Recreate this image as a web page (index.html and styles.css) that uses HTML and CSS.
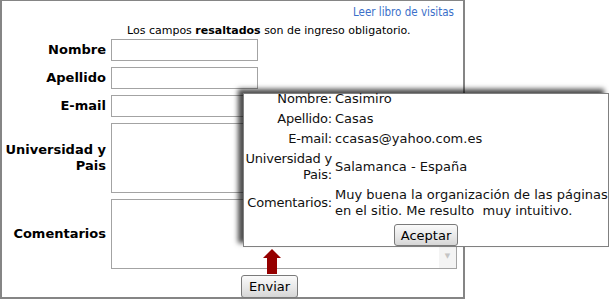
FILE: index.html
```html
<!DOCTYPE html>
<html lang="es">
<head>
    <meta charset="UTF-8">
    <title>Libro de visitas</title>
    <link rel="stylesheet" href="styles.css">
</head>
<body>
<div class="frame">
    <div class="top-link"><a href="#">Leer libro de visitas</a></div>
    <p class="note">Los campos <b>resaltados</b> son de ingreso obligatorio.</p>

    <form class="guest-form">
        <label class="lbl" for="nombre">Nombre</label>
        <input class="field" type="text" id="nombre">

        <label class="lbl" for="apellido">Apellido</label>
        <input class="field" type="text" id="apellido">

        <label class="lbl" for="email">E-mail</label>
        <input class="field" type="text" id="email">

        <label class="lbl" for="univ">Universidad y<br>Pais</label>
        <textarea class="area" id="univ"></textarea>

        <label class="lbl" for="coment">Comentarios</label>
        <div class="area area-scroll">
            <span class="scrollbar">&#9660;</span>
        </div>

        <div class="send-row">
            <button type="button" class="btn">Enviar</button>
        </div>
    </form>

    <div class="arrow">
        <span class="arrow-head"></span>
        <span class="arrow-shaft"></span>
    </div>
</div>

<div class="popup">
    <div class="summary">
        <span class="s-lbl">Nombre:</span><span class="s-val">Casimiro</span>
        <span class="s-lbl">Apellido:</span><span class="s-val">Casas</span>
        <span class="s-lbl">E-mail:</span><span class="s-val">ccasas@yahoo.com.es</span>
        <span class="s-lbl">Universidad y<br>Pais:</span><span class="s-val">Salamanca - España</span>
        <span class="s-lbl">Comentarios:</span><span class="s-val">Muy buena la organización de las páginas<br>en el sitio. Me resulto&nbsp; muy intuitivo.</span>
    </div>
    <div class="popup-foot">
        <button type="button" class="btn btn-ok">Aceptar</button>
    </div>
</div>
</body>
</html>
```
FILE: styles.css
```css
body {
    margin: 0;
    background: #fff;
    font-family: 'DejaVu Sans', Verdana, sans-serif;
    color: #000;
}

.frame {
    position: relative;
    width: 461px;
    height: 296px;
    border: 2px solid #858585;
    border-top-width: 1px;
}

.top-link {
    text-align: right;
    padding: 4px 9px 0 0;
    height: 16px;
    font-size: 11px;
}

.top-link a {
    color: #3b6fc9;
    text-decoration: none;
    font-family: 'DejaVu Sans Condensed', 'DejaVu Sans', sans-serif;
    font-size: 11.5px;
}

.note {
    margin: 3px 0 0 0;
    padding-left: 125px;
    font-size: 11px;
    line-height: 13px;
    height: 13px;
}

.guest-form {
    display: grid;
    grid-template-columns: 104px 346px;
    column-gap: 5px;
    row-gap: 6px;
    margin-top: 2px;
}

.lbl {
    font-weight: bold;
    font-size: 13px;
    text-align: right;
    align-self: center;
    line-height: 16px;
}

.field {
    box-sizing: border-box;
    width: 147px;
    height: 22px;
    margin: 0;
    border: 1px solid #a3a3a3;
}

.area {
    box-sizing: border-box;
    width: 346px;
    height: 70px;
    margin: 0;
    border: 1px solid #a3a3a3;
    resize: none;
}

.area-scroll {
    position: relative;
}

.scrollbar {
    position: absolute;
    right: 0;
    top: 0;
    bottom: 0;
    width: 17px;
    background: #f4f4f4;
    color: #c4c4c4;
    font-size: 7px;
    text-align: center;
    padding-top: 52px;
    box-sizing: border-box;
}

.send-row {
    grid-column: 2;
    padding-left: 130px;
}

.btn {
    font-family: 'DejaVu Sans', sans-serif;
    font-size: 13px;
    padding: 0 7px;
    height: 23px;
    border: 1px solid #7a7a7a;
    border-radius: 3px;
    background: linear-gradient(#fafafa, #e6e6e6 60%, #d6d6d6);
    color: #000;
}

.arrow {
    position: absolute;
    left: 261px;
    top: 248px;
    width: 18px;
    display: flex;
    flex-direction: column;
    align-items: center;
}

.arrow-head {
    width: 0;
    height: 0;
    border-left: 9px solid transparent;
    border-right: 9px solid transparent;
    border-bottom: 9px solid #950000;
}

.arrow-shaft {
    width: 10px;
    height: 16px;
    background: #950000;
}

.popup {
    position: absolute;
    left: 243px;
    top: 93px;
    width: 364px;
    height: 152px;
    border: 1px solid #808080;
    background: #fff;
    box-shadow: -5px -4px 5px rgba(0, 0, 0, 0.7);
    font-size: 13px;
    color: #111;
}

.summary {
    display: grid;
    grid-template-columns: 88px 1fr;
    column-gap: 3px;
    row-gap: 4px;
    align-items: center;
    margin-top: -3px;
}

.s-lbl {
    text-align: right;
    line-height: 16px;
    white-space: nowrap;
    letter-spacing: -0.2px;
}

.s-val {
    line-height: 16px;
    white-space: nowrap;
}

.popup-foot {
    text-align: center;
    margin-top: 5px;
}

.btn-ok {
    height: 22px;
    padding: 0 6px;
}
```
